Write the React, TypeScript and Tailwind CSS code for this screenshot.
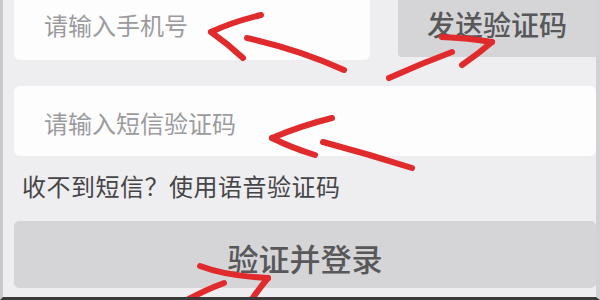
export default function App() {
  return (
    <div className="relative w-[600px] h-[300px] overflow-hidden bg-[#eeedf0] border-l-[3px] border-l-[#c9c9cb] border-r-[4px] border-r-[#d2d2d4] border-b-[3px] border-b-[#3a3a3a] font-['Noto_Sans_CJK_SC','Noto_Sans',sans-serif]">
      <div className="pl-[11px]">
        <div className="flex items-start gap-[28px]">
          <div className="w-[356px] h-[60px] bg-[#fdfdfd] rounded-b-[6px] flex items-center pl-[30px] pb-[10px] text-[24px] text-[#9b9b9d]">
            请输入手机号
          </div>
          <div className="flex-1 h-[57px] bg-[#d5d4d7] rounded-bl-[4px] flex items-center justify-center pb-[9px] text-[28px] font-medium text-[#58585a]">
            发送验证码
          </div>
        </div>
        <div className="mt-[26px] h-[70px] bg-[#fdfdfd] rounded-[6px] flex items-center pl-[30px] pt-[4px] text-[24px] text-[#9b9b9d]">
          请输入短信验证码
        </div>
        <p className="mt-[15px] ml-[8px] text-[24px] leading-[30px] tracking-[0.5px] text-[#454547]">
          收不到短信？使用语音验证码
        </p>
        <div className="mt-[20px] h-[67px] bg-[#d5d4d7] rounded-[5px] flex items-center justify-center pt-[7px] text-[31px] font-medium text-[#58585a]">
          验证并登录
        </div>
      </div>

      <svg
        className="absolute left-[-3px] top-0 pointer-events-none"
        width="600"
        height="300"
        viewBox="0 0 600 300"
        fill="none"
        stroke="#e02a2c"
        strokeWidth="6"
        strokeLinecap="round"
        strokeLinejoin="round"
      >
        <path d="M261 15 Q232 22 211 32" />
        <path d="M211 32 Q228 44 243 58" />
        <path d="M247 38 Q300 50 344 70" />

        <path d="M389 78 Q420 64 452 52" />
        <path d="M442 37 Q468 38 492 42" />
        <path d="M492 42 Q478 54 462 65" />

        <path d="M332 118 Q300 126 272 138" />
        <path d="M272 138 Q292 148 315 155" />
        <path d="M323 142 Q368 154 412 168" />

        <path d="M200 266 Q226 276 268 278" />
        <path d="M268 278 Q258 290 250 302" />
        <path d="M183 302 Q205 290 224 283" />
      </svg>
    </div>
  );
}
